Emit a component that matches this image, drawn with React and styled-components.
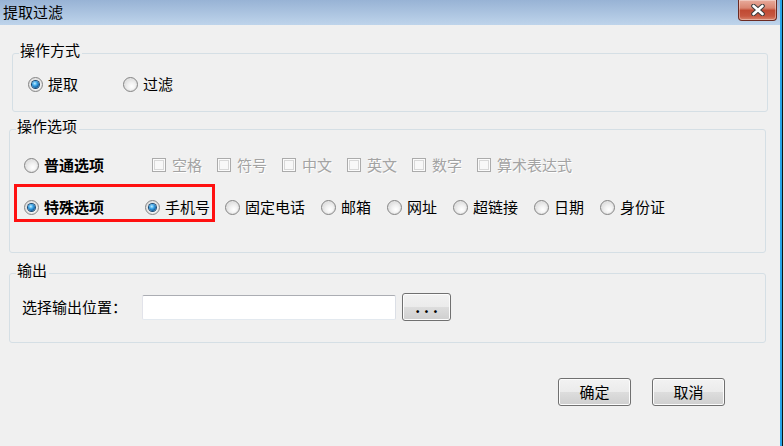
import React from "react";
import styled, { createGlobalStyle } from "styled-components";

const FONT = `"Noto Sans CJK SC", "Noto Sans", sans-serif`;

const Global = createGlobalStyle`
  html, body { margin: 0; padding: 0; }
  body {
    width: 784px; height: 446px; overflow: hidden;
    background: #f0f0f0; font-family: ${FONT}; color: #000;
  }
  * { box-sizing: border-box; }
`;

const Screen = styled.div`
  display: flex;
  width: 784px;
  height: 446px;
`;

const Window = styled.div`
  flex: 1;
  display: flex;
  flex-direction: column;
  background: #f0f0f0;
`;

const Edge = styled.div`
  width: 4px;
  background: linear-gradient(to right, #29a5e8 0 2px, #141414 2px 3px, #dcdcdc 3px 4px);
`;

const TitleBar = styled.div`
  height: 25px;
  display: flex;
  align-items: flex-start;
  justify-content: space-between;
  padding: 0 3px 0 3px;
  background: linear-gradient(#98b3d5, #bed4eb);
`;

const Title = styled.div`
  font-size: 15px;
  line-height: 24px;
`;

const CloseBtn = styled.div`
  width: 39px;
  height: 21px;
  display: flex;
  align-items: center;
  justify-content: center;
  border: 1px solid #6b2a22;
  border-top: none;
  border-radius: 0 0 4px 4px;
  background: linear-gradient(#e8ab9c 0%, #d98571 40%, #c04a33 52%, #c65740 80%, #d9856c 100%);
  box-shadow: inset 0 0 0 1px rgba(255, 255, 255, 0.35);
`;

const Body = styled.div`
  display: flex;
  flex-direction: column;
`;

const Group = styled.fieldset`
  margin: ${(p) => p.$mt}px ${(p) => p.$mr}px 0 ${(p) => p.$ml}px;
  padding: 0;
  border: 1px solid #d5dfe5;
  border-radius: 3px;
  min-width: 0;
`;

const Legend = styled.legend`
  margin-left: 6px;
  padding: 0 2px 6px 1px;
  font-size: 15px;
  line-height: 16px;
`;

const GroupBody = styled.div`
  display: flex;
  flex-direction: column;
  padding: ${(p) => p.$pt}px 0 ${(p) => p.$pb}px ${(p) => p.$pl}px;
`;

const Row = styled.div`
  display: flex;
  align-items: ${(p) => p.$align || "center"};
  gap: ${(p) => p.$gap || 0}px;
  padding-left: ${(p) => p.$pl || 0}px;
  margin-top: ${(p) => p.$mt || 0}px;
`;

const Item = styled.label`
  display: flex;
  align-items: center;
  gap: ${(p) => (p.$box ? 6 : 5)}px;
  height: 20px;
  margin-left: ${(p) => p.$ml || 0}px;
  font-size: 15px;
  line-height: 20px;
  font-weight: ${(p) => (p.$bold ? 700 : 400)};
  color: ${(p) => (p.$disabled ? "#a3a3a3" : "#000")};
  text-shadow: ${(p) => (p.$disabled ? "1px 1px 0 #fff" : "none")};
  white-space: nowrap;
`;

const RadioMark = styled.span`
  position: relative;
  flex: none;
  width: 15px;
  height: 15px;
  border-radius: 50%;
  border: 1px solid #848484;
  background: radial-gradient(circle at 60% 65%, #ffffff 0, #f1f1f1 35%, #cdcdcd 100%);
  box-shadow: inset 0 0 0 1px #e4e4e4;
  &::after {
    content: "";
    display: ${(p) => (p.$on ? "block" : "none")};
    position: absolute;
    left: 3px;
    top: 3px;
    width: 7px;
    height: 7px;
    border-radius: 50%;
    background: radial-gradient(circle at 40% 35%, #c4f0ff 0, #3fa8ea 35%, #0b5595 75%, #06355f 100%);
    box-shadow: 0 0 0 1px #1b4a73;
  }
`;

const CheckMark = styled.span`
  flex: none;
  width: 14px;
  height: 14px;
  border: 1px solid #ababab;
  background: #f8f8f8;
  box-shadow: inset 0 0 0 1px #fbfbfb, inset 0 0 0 2px #d8d8d8;
`;

const Highlight = styled.div`
  display: flex;
  align-items: center;
  border: 3px solid #ff1010;
  padding: 10px 2px 2px 7px;
`;

const Rest = styled.div`
  display: flex;
  align-items: center;
  gap: 16px;
  margin-left: 10px;
  margin-bottom: 5px;
`;

const FieldLabel = styled.span`
  width: ${(p) => p.$w}px;
  flex: none;
  font-size: 15px;
  line-height: 20px;
  white-space: nowrap;
`;

const TextInput = styled.div`
  width: 254px;
  height: 25px;
  background: #fff;
  border: 1px solid;
  border-color: #abadb3 #dbdfe6 #e3e9ef #e2e3ea;
  border-radius: 2px;
`;

const Button = styled.button`
  width: ${(p) => p.$w}px;
  height: 28px;
  margin-left: ${(p) => p.$ml || 0}px;
  padding: 0 0 0 ${(p) => (p.$dots ? 4 : 0)}px;
  border: 1px solid #707070;
  border-radius: 3px;
  background: linear-gradient(#f2f2f2 0%, #ebebeb 50%, #dddddd 51%, #cfcfcf 100%);
  box-shadow: inset 0 0 0 1px #fcfcfc;
  font-family: ${FONT};
  font-size: 15px;
  font-weight: ${(p) => (p.$dots ? 700 : 400)};
  letter-spacing: ${(p) => (p.$dots ? 4 : 0)}px;
  color: #000;
  line-height: 20px;
`;

const Footer = styled.div`
  display: flex;
  justify-content: flex-end;
  gap: 21px;
  margin-top: 35px;
  padding-right: 55px;
`;

function Radio({ on, bold, ml, children }) {
  return (
    <Item $bold={bold} $ml={ml}>
      <RadioMark $on={on} />
      {children}
    </Item>
  );
}

function Check({ ml, children }) {
  return (
    <Item $box $disabled $ml={ml}>
      <CheckMark />
      {children}
    </Item>
  );
}

export default function App() {
  return (
    <>
      <Global />
      <Screen>
        <Window>
          <TitleBar>
            <Title>提取过滤</Title>
            <CloseBtn>
              <svg width="16" height="12" viewBox="0 0 16 12">
                <path d="M3.5 2 L12.5 10 M12.5 2 L3.5 10" stroke="#3b3b3b" strokeWidth="4.6" strokeLinecap="round" />
                <path d="M3.5 2 L12.5 10 M12.5 2 L3.5 10" stroke="#ffffff" strokeWidth="2.6" strokeLinecap="round" />
              </svg>
            </CloseBtn>
          </TitleBar>
          <Body>
            <Group $mt={17} $ml={12} $mr={12}>
              <Legend>操作方式</Legend>
              <GroupBody $pt={10} $pb={17} $pl={15}>
                <Row>
                  <Radio on>提取</Radio>
                  <Radio ml={45}>过滤</Radio>
                </Row>
              </GroupBody>
            </Group>

            <Group $mt={6} $ml={9} $mr={14}>
              <Legend>操作选项</Legend>
              <GroupBody $pt={15} $pb={30} $pl={4}>
                <Row $pl={10} $gap={15}>
                  <Radio bold>普通选项</Radio>
                  <Check ml={33}>空格</Check>
                  <Check>符号</Check>
                  <Check>中文</Check>
                  <Check>英文</Check>
                  <Check>数字</Check>
                  <Check>算术表达式</Check>
                </Row>
                <Row $mt={9} $align="flex-end">
                  <Highlight>
                    <Radio on bold>特殊选项</Radio>
                    <Radio on ml={41}>手机号</Radio>
                  </Highlight>
                  <Rest>
                    <Radio>固定电话</Radio>
                    <Radio>邮箱</Radio>
                    <Radio>网址</Radio>
                    <Radio>超链接</Radio>
                    <Radio>日期</Radio>
                    <Radio>身份证</Radio>
                  </Rest>
                </Row>
              </GroupBody>
            </Group>

            <Group $mt={9} $ml={9} $mr={14}>
              <Legend>输出</Legend>
              <GroupBody $pt={9} $pb={21} $pl={12}>
                <Row>
                  <FieldLabel $w={120}>选择输出位置：</FieldLabel>
                  <TextInput />
                  <Button $w={49} $ml={6} $dots>...</Button>
                </Row>
              </GroupBody>
            </Group>

            <Footer>
              <Button $w={73}>确定</Button>
              <Button $w={73}>取消</Button>
            </Footer>
          </Body>
        </Window>
        <Edge />
      </Screen>
    </>
  );
}
